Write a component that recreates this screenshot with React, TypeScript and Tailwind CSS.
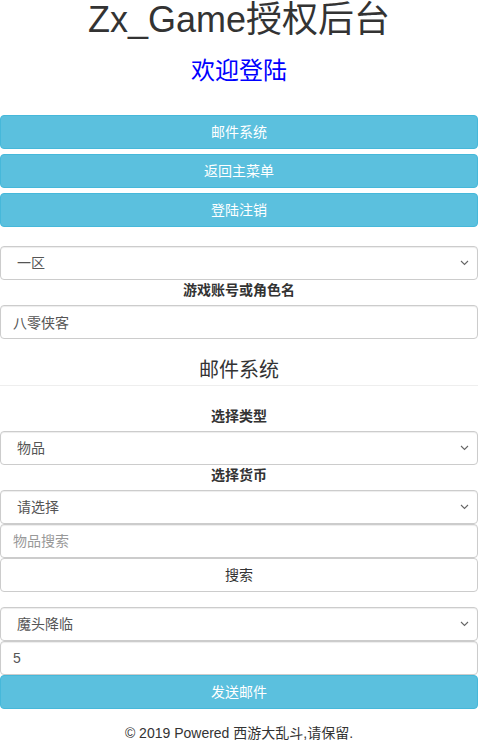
import React from 'react';

const font = { fontFamily: '"Liberation Sans", "Noto Sans CJK SC", sans-serif' };

function Chevron() {
  return (
    <svg className="pointer-events-none absolute right-[9px] top-1/2 -translate-y-1/2" width="9" height="6" viewBox="0 0 9 6" fill="none">
      <path d="M1 1l3.5 3.5L8 1" stroke="#666" strokeWidth="1.1" />
    </svg>
  );
}

function Select({ value }: { value: string }) {
  return (
    <div className="relative">
      <select
        defaultValue={value}
        className="block h-[34px] w-full appearance-none rounded-[4px] border border-[#ccc] bg-white pl-[16px] pr-8 text-[14px] text-[#555] shadow-[inset_0_1px_1px_rgba(0,0,0,0.075)]"
      >
        <option>{value}</option>
      </select>
      <Chevron />
    </div>
  );
}

function Input({ value, placeholder }: { value?: string; placeholder?: string }) {
  return (
    <input
      defaultValue={value}
      placeholder={placeholder}
      className="block h-[34px] w-full rounded-[4px] border border-[#ccc] bg-white px-[12px] text-[14px] text-[#555] placeholder:text-[#999] shadow-[inset_0_1px_1px_rgba(0,0,0,0.075)]"
    />
  );
}

function InfoButton({ children }: { children: React.ReactNode }) {
  return (
    <button className="block h-[34px] w-full rounded-[4px] border border-[#46b8da] bg-[#5bc0de] text-[14px] text-white">
      {children}
    </button>
  );
}

function Label({ children }: { children: React.ReactNode }) {
  return <div className="mb-[5px] text-center text-[14px] font-bold leading-[20px] text-[#333]">{children}</div>;
}

export default function App() {
  return (
    <div className="bg-white text-[#333]" style={font}>
      {/* Header */}
      <h1 className="h-[40px] text-center text-[36px] leading-[40px] font-normal text-[#333]">Zx_Game授权后台</h1>
      <h2 className="mt-[14px] h-[34px] text-center text-[24px] leading-[34px] text-[#0000ff]">欢迎登陆</h2>

      {/* Menu buttons */}
      <div className="mt-[27px] flex flex-col gap-[5px]">
        <InfoButton>邮件系统</InfoButton>
        <InfoButton>返回主菜单</InfoButton>
        <InfoButton>登陆注销</InfoButton>
      </div>

      {/* Account */}
      <div className="mt-[19px]">
        <Select value="一区" />
        <Label>游戏账号或角色名</Label>
        <Input value="八零侠客" />
      </div>

      {/* Mail system */}
      <div className="mt-[17px] border-b border-[#eee] pb-[1px]">
        <h3 className="text-center text-[20px] leading-[28px] text-[#333]">邮件系统</h3>
      </div>

      <div className="mt-[20px]">
        <Label>选择类型</Label>
        <Select value="物品" />
        <Label>选择货币</Label>
        <Select value="请选择" />
        <Input placeholder="物品搜索" />
        <button className="block h-[34px] w-full rounded-[4px] border border-[#ccc] bg-white text-[14px] text-[#333]">搜索</button>
        <div className="mt-[15px]">
          <Select value="魔头降临" />
          <Input value="5" />
          <InfoButton>发送邮件</InfoButton>
        </div>
      </div>

      {/* Footer */}
      <div className="mt-[14px] text-center text-[14px] leading-[20px] text-[#333]">© 2019 Powered 西游大乱斗,请保留.</div>
    </div>
  );
}
